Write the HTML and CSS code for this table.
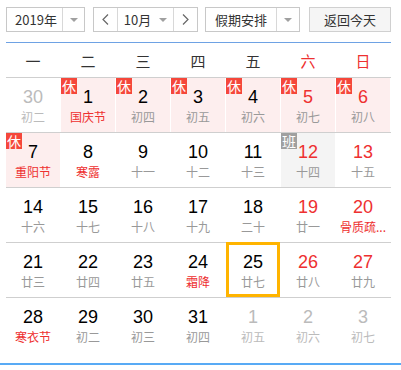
FILE: index.html
```html
<!DOCTYPE html>
<html lang="zh-CN">
<head>
<meta charset="utf-8">
<link rel="stylesheet" href="styles.css">
</head>
<body>
<div class="cal">
  <div class="toolbar">
    <div class="select year">
      <span class="sel-text">2019年</span>
      <span class="sel-arrow"><i class="tri"></i></span>
    </div>
    <div class="month-group">
      <span class="nav"><svg width="7" height="11" viewBox="0 0 7 11"><polyline points="6,0.5 1,5.5 6,10.5" fill="none" stroke="#666" stroke-width="1.2"/></svg></span>
      <span class="month"><span>10月</span><i class="tri"></i></span>
      <span class="nav"><svg width="7" height="11" viewBox="0 0 7 11"><polyline points="1,0.5 6,5.5 1,10.5" fill="none" stroke="#666" stroke-width="1.2"/></svg></span>
    </div>
    <div class="select holiday">
      <span class="sel-text">假期安排</span>
      <span class="sel-arrow"><i class="tri"></i></span>
    </div>
    <div class="today">返回今天</div>
  </div>

  <div class="weekdays">
    <span>一</span><span>二</span><span>三</span><span>四</span><span>五</span><span class="wk">六</span><span class="wk">日</span>
  </div>

  <div class="week">
    <div class="cell other"><b>30</b><em>初二</em></div>
    <div class="cell rest"><i class="badge">休</i><b>1</b><em class="fest">国庆节</em></div>
    <div class="cell rest"><i class="badge">休</i><b>2</b><em>初四</em></div>
    <div class="cell rest"><i class="badge">休</i><b>3</b><em>初五</em></div>
    <div class="cell rest"><i class="badge">休</i><b>4</b><em>初六</em></div>
    <div class="cell rest wkd"><i class="badge">休</i><b>5</b><em>初七</em></div>
    <div class="cell rest wkd"><i class="badge">休</i><b>6</b><em>初八</em></div>
  </div>
  <div class="week">
    <div class="cell rest"><i class="badge">休</i><b>7</b><em class="fest">重阳节</em></div>
    <div class="cell"><b>8</b><em class="fest">寒露</em></div>
    <div class="cell"><b>9</b><em>十一</em></div>
    <div class="cell"><b>10</b><em>十二</em></div>
    <div class="cell"><b>11</b><em>十三</em></div>
    <div class="cell work wkd"><i class="badge grey">班</i><b>12</b><em>十四</em></div>
    <div class="cell wkd"><b>13</b><em>十五</em></div>
  </div>
  <div class="week">
    <div class="cell"><b>14</b><em>十六</em></div>
    <div class="cell"><b>15</b><em>十七</em></div>
    <div class="cell"><b>16</b><em>十八</em></div>
    <div class="cell"><b>17</b><em>十九</em></div>
    <div class="cell"><b>18</b><em>二十</em></div>
    <div class="cell wkd"><b>19</b><em>廿一</em></div>
    <div class="cell wkd"><b>20</b><em class="fest">骨质疏...</em></div>
  </div>
  <div class="week">
    <div class="cell"><b>21</b><em>廿三</em></div>
    <div class="cell"><b>22</b><em>廿四</em></div>
    <div class="cell"><b>23</b><em>廿五</em></div>
    <div class="cell"><b>24</b><em class="fest">霜降</em></div>
    <div class="cell selected"><b>25</b><em>廿七</em></div>
    <div class="cell wkd"><b>26</b><em>廿八</em></div>
    <div class="cell wkd"><b>27</b><em>廿九</em></div>
  </div>
  <div class="week last">
    <div class="cell"><b>28</b><em class="fest">寒衣节</em></div>
    <div class="cell"><b>29</b><em>初二</em></div>
    <div class="cell"><b>30</b><em>初三</em></div>
    <div class="cell"><b>31</b><em>初四</em></div>
    <div class="cell other"><b>1</b><em>初五</em></div>
    <div class="cell other"><b>2</b><em>初六</em></div>
    <div class="cell other"><b>3</b><em>初七</em></div>
  </div>
</div>
<div class="bottom-line"></div>
</body>
</html>
```

FILE: styles.css
```css
* { box-sizing: border-box; }
body {
  margin: 0;
  background: #fff;
  font-family: "Liberation Sans", Arial, "Noto Sans CJK SC", sans-serif;
  color: #000;
}
.cal {
  padding: 7px 0 0 6px;
  width: 391px;
}
.toolbar {
  display: flex;
  height: 25px;
  font-family: "Noto Sans CJK SC", sans-serif;
  font-size: 13px;
  color: #333;
}
.select {
  display: flex;
  border: 1px solid #c8c8c8;
  background: #fff;
  height: 25px;
}
.sel-text {
  display: flex;
  align-items: center;
  justify-content: center;
  border-right: 1px solid #d8d8d8;
  line-height: 23px;
}
.sel-arrow {
  display: flex;
  align-items: center;
  justify-content: center;
  flex: 1;
}
.tri {
  display: block;
  width: 0;
  height: 0;
  border-left: 4px solid transparent;
  border-right: 4px solid transparent;
  border-top: 4px solid #a0a0a0;
}
.year { width: 79px; }
.year .sel-text { width: 56px; padding-left: 3px; }
.month-group {
  display: flex;
  margin-left: 8px;
  width: 105px;
  height: 25px;
  border: 1px solid #c8c8c8;
}
.nav {
  display: flex;
  align-items: center;
  justify-content: center;
  width: 23px;
}
.month {
  display: flex;
  align-items: center;
  justify-content: center;
  gap: 8px;
  flex: 1;
  border-left: 1px solid #d8d8d8;
  border-right: 1px solid #d8d8d8;
}
.holiday {
  margin-left: 7px;
  width: 95px;
}
.holiday .sel-text { width: 71px; }
.today {
  margin-left: 9px;
  width: 82px;
  height: 25px;
  border: 1px solid #d0d0d0;
  background: #f5f5f5;
  display: flex;
  align-items: center;
  justify-content: center;
}
.weekdays {
  margin-top: 10px;
  border-top: 1px solid #6ea2e4;
  border-bottom: 1px solid #cfcfcf;
  height: 36px;
  display: grid;
  grid-template-columns: repeat(7, 54px);
  column-gap: 1px;
  width: 385px;
  font-family: "Noto Sans CJK SC", sans-serif;
  font-size: 15px;
  color: #333;
}
.weekdays span {
  display: flex;
  align-items: center;
  justify-content: center;
}
.weekdays .wk { color: #ee3030; }
.week {
  display: grid;
  grid-template-columns: repeat(7, 54px);
  column-gap: 1px;
  width: 385px;
  border-bottom: 1px solid #cfcfcf;
}
.week.last { border-bottom: none; }
.cell {
  position: relative;
  height: 54px;
  padding-top: 8px;
  text-align: center;
}
.cell b {
  display: block;
  font-weight: normal;
  font-size: 18px;
  line-height: 22px;
  color: #000;
}
.cell em {
  display: block;
  font-style: normal;
  font-family: "Noto Sans CJK SC", sans-serif;
  font-size: 12px;
  line-height: 16px;
  margin-top: 1px;
  color: #999;
  white-space: nowrap;
}
.cell.wkd b { color: #ee3030; }
.cell em.fest { color: #ee3030; }
.cell.other b, .cell.other em { color: #bbb; }
.cell.rest { background: #fdeeee; }
.cell.work { background: #f4f4f4; }
.badge {
  position: absolute;
  top: 0;
  left: 0;
  width: 16px;
  height: 16px;
  background: #f5473b;
  color: #fff;
  font-style: normal;
  font-family: "Noto Sans CJK SC", sans-serif;
  font-size: 14px;
  line-height: 16px;
  text-align: center;
}
.badge.grey { background: #a0a0a0; }
.selected::after {
  content: "";
  position: absolute;
  top: -1px;
  left: 0;
  right: 0;
  bottom: 0;
  border: 3px solid #ffb400;
}
.bottom-line {
  margin-top: 11px;
  height: 2px;
  background: #58aaf5;
  width: 401px;
}
```
